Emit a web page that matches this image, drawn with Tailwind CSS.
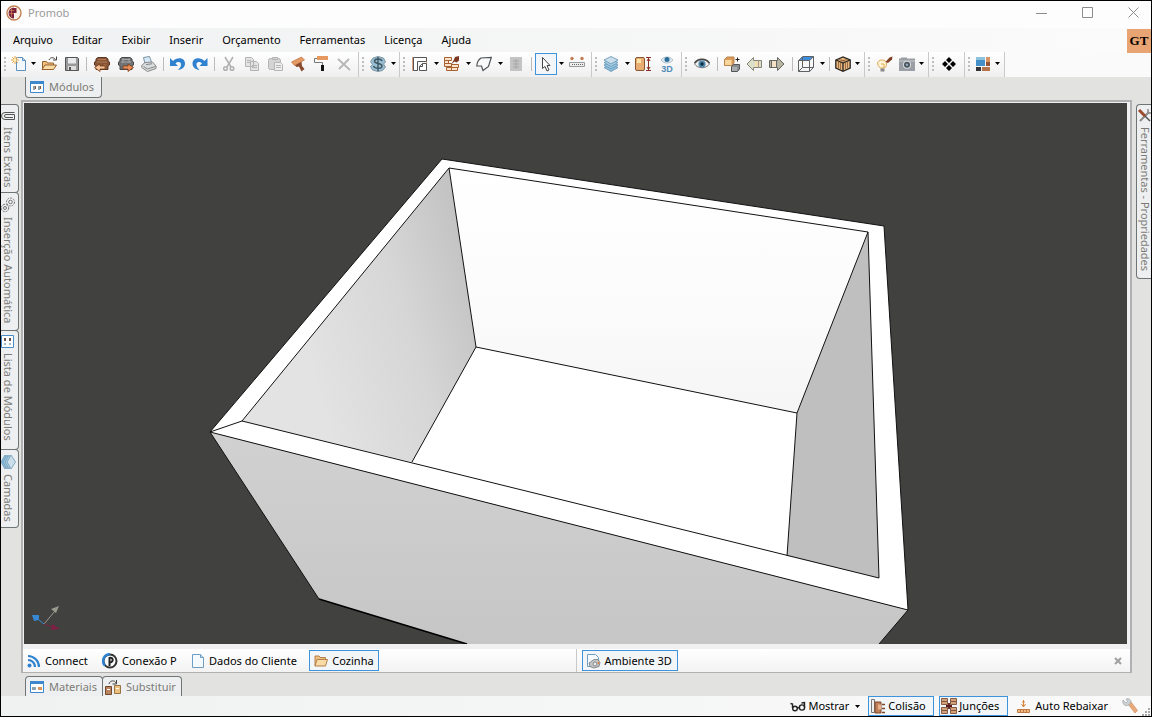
<!DOCTYPE html>
<html lang="pt-BR">
<head>
<meta charset="utf-8">
<title>Promob</title>
<script src="https://cdn.jsdelivr.net/npm/@tailwindcss/browser@4"></script>
</head>
<body class="flex h-screen flex-col overflow-hidden whitespace-nowrap border border-black bg-[#e2e2e0] font-['Noto_Sans','Open_Sans',sans-serif] text-[11px] leading-4 text-black">
<svg class="hidden">
  <symbol id="caret" viewBox="0 0 5 3"><path d="M0 0h5L2.5 3z"/></symbol>
  <symbol id="grip" viewBox="0 0 2 14"><path d="M0 0h2v2H0zM0 4h2v2H0zM0 8h2v2H0zM0 12h2v2H0z" fill="#bdbdbd"/></symbol>
</svg>

<header class="flex h-[27px] shrink-0 items-center bg-[#fdfdfd] pb-1 pl-[5px] pr-2">
  <svg class="size-4" viewBox="0 0 16 16"><circle cx="8" cy="8" r="7" fill="#fff" stroke="#c07f50" stroke-width="1.400"/><path d="M8 2.500v11A5.500 5.500 0 0 1 8 2.500z" fill="#7c1f38"/><path d="M8.500 2.500a5.500 5.500 0 0 1 0 11z" fill="#fbeee2"/><path d="M8 3h2.500v5H8z" fill="#7c1f38"/><path d="M3.500 5.500H8M3 8.500h5M5.500 3.500V12" stroke="#d08a5b" stroke-width=".7"/></svg>
  <h1 class="ml-1.5 flex-1 text-[#9b9b9b]">Promob</h1>
  <div class="flex items-center gap-[31px] pr-1 text-[#8c8c8c]">
    <button aria-label="Minimizar"><svg class="h-3 w-[11px]" viewBox="0 0 11 12"><path d="M0 6.500h11" stroke="currentColor"/></svg></button>
    <button aria-label="Maximizar" class="ml-1"><svg class="size-[11px]" viewBox="0 0 11 11"><path d="M.5.5h10v10H.5z" fill="none" stroke="currentColor"/></svg></button>
    <button aria-label="Fechar" class="ml-1"><svg class="size-[11px]" viewBox="0 0 11 11"><path d="m.5.5 10 10m0-10-10 10" stroke="currentColor"/></svg></button>
  </div>
</header>

<div class="relative shrink-0 bg-linear-to-r from-[#f0f1f2] to-[#fbfbfb]">
  <nav class="flex h-6 items-center gap-[19px] pl-3">
    <button>Arquivo</button><button>Editar</button><button>Exibir</button><button>Inserir</button><button>Orçamento</button><button>Ferramentas</button><button>Licença</button><button>Ajuda</button>
  </nav>
  <button class="absolute right-0 top-px size-6 bg-[#e8a472] font-['Liberation_Serif',serif] text-[13px] font-bold">GT</button>

  <div class="flex h-[25px] items-center bg-[#fafafa] [&>div]:pb-0.5">
    <div class="flex h-full w-[358px] items-center border-r border-[#c9c9c9] bg-linear-to-b from-white to-[#efefef]">
      <svg class="mx-[3px] h-3.5 w-0.5 shrink-0"><use href="#grip"/></svg>
      <button aria-label="Novo" class="flex h-6 w-5 items-center justify-center"><svg class="size-4" viewBox="0 0 16 16"><path d="M5.500 1.500h6l3 3v10h-9z" fill="#f2f8fd" stroke="#5c92bd"/><path d="M11.500 1.500v3h3" fill="#b9d8ef" stroke="#5c92bd"/><path d="M4 0v8M0 4h8M1.200 1.200l5.600 5.600M6.800 1.200 1.200 6.800" stroke="#e8a040"/><circle cx="4" cy="4" r="1.500" fill="#fff1b0"/></svg></button>
      <button aria-label="Mais opções de novo" class="flex h-6 w-2 items-center justify-center"><svg class="h-[3px] w-[5px]"><use href="#caret"/></svg></button>
      <button aria-label="Abrir" class="flex h-6 w-6 items-center justify-center"><svg class="size-4" viewBox="0 0 16 16"><path d="M1.500 13.500v-8h4l1 1.500h6v2" fill="#f0c07e" stroke="#97622f"/><path d="M1 13.500 4 9h11.500l-3 4.500z" fill="#f9dba5" stroke="#97622f"/><path d="M8 4c1.500-3 4.500-3 6.500-.5M15.500.5v3.500H12" fill="none" stroke="#444"/></svg></button>
      <button aria-label="Salvar" class="flex h-6 w-[22px] items-center justify-center"><svg class="size-4" viewBox="0 0 16 16"><path d="M1.500 1.500h12l1 1v12h-13z" fill="#999" stroke="#555"/><path d="M4 2h8v5.500H4z" fill="#e8eaec"/><path d="M4 10h8v4H4z" fill="#ddd"/><path d="M5 11h2v3H5z" fill="#555"/></svg></button>
      <i class="mx-[3px] h-3.5 w-px bg-[#bcbcbc]"></i>
      <button aria-label="Importar" class="flex h-6 w-6 items-center justify-center"><svg class="size-4" viewBox="0 0 16 16"><path d="M2 5V3l2-1.500h8L14 3v2l1.500 1v3L14 10v3.500H2V10L.5 9V6z" fill="#87563a" stroke="#5a3521"/><path d="M4 3.500h8M3 6h10M11 8v5" stroke="#b57a4c"/><path d="M6 8v2h5v3H6v2.500L.5 11.500z" fill="#f3c39a" stroke="#7b3c17" stroke-width=".8"/></svg></button>
      <button aria-label="Exportar" class="flex h-6 w-6 items-center justify-center"><svg class="size-4" viewBox="0 0 16 16"><path d="M2 5V3l2-1.500h8L14 3v2l1.500 1v3L14 10v3.500H2V10L.5 9V6z" fill="#707273" stroke="#454748"/><path d="M4 3.500h8M3 6h10M5 2v5m6-5v5" stroke="#a3a5a6"/><path d="M10 8v2H5v3h5v2.500l5.500-4z" fill="#e98d5b" stroke="#7b3c17" stroke-width=".8"/></svg></button>
      <button aria-label="Imprimir" class="flex h-6 w-[22px] items-center justify-center"><svg class="size-4" viewBox="0 0 16 16"><path d="M4 8 2.500 1.500 8.500.5l2.500 7z" fill="#d5e9f7" stroke="#7d93a3"/><path d="m.7 9.500 3.300-3 7.500-.5 3.500 4v2.500l-8.500 3-5.800-4z" fill="#d9dcde" stroke="#888"/><path d="m2.500 10.500 4 2.500 8-2.500M5 8.700l6-1" fill="none" stroke="#888"/></svg></button>
      <i class="mx-[3px] h-3.5 w-px bg-[#bcbcbc]"></i>
      <button aria-label="Desfazer" class="flex h-6 w-[22px] items-center justify-center"><svg class="size-4" viewBox="0 0 16 16"><path d="M0 2v8h8L5.500 7.500C8 5 11.500 6 11 9c-.2 2-1.500 3.500-3 5 4-.5 7-3 7-6.500C15 2 7.500.5 3 5z" fill="#2f82cf"/></svg></button>
      <button aria-label="Refazer" class="flex h-6 w-[22px] items-center justify-center"><svg class="size-4" viewBox="0 0 16 16"><path d="M15.500 2v8h-8L10 7.500C7.500 5 4 6 4.500 9c.2 2 1.500 3.500 3 5-4-.5-7-3-7-6.500C.5 2 8 .5 12.500 5z" fill="#2f82cf"/></svg></button>
      <i class="mx-[3px] h-3.5 w-px bg-[#bcbcbc]"></i>
      <button aria-label="Recortar" class="flex h-6 w-[22px] items-center justify-center"><svg class="size-4" viewBox="0 0 16 16"><g fill="none" stroke="#b0b0b0" stroke-width="1.500"><path d="m4 1 6 10M12 1 6 11"/><circle cx="4.500" cy="12.500" r="1.800"/><circle cx="11" cy="12.500" r="1.800"/></g></svg></button>
      <button aria-label="Copiar" class="flex h-6 w-6 items-center justify-center"><svg class="size-4" viewBox="0 0 16 16"><g fill="#e3e3e3" stroke="#b4b4b4"><path d="M1.500 1.500h6l2 2v7h-8zM6.500 5.500h6l2 2v7h-8z"/><path d="M3 4.500h4M3 6.500h3M8 9.500h5M8 11.500h5"/></g></svg></button>
      <button aria-label="Colar" class="flex h-6 w-6 items-center justify-center"><svg class="size-4" viewBox="0 0 16 16"><g fill="#d4d4d4" stroke="#b4b4b4"><rect x=".5" y="2.500" width="12" height="11" rx="2"/><path d="M4.500 1.500h5v2h-5z"/><path fill="#eee" d="M6.500 6.500h6l2 2v6h-8z"/><path d="M8 9.500h5M8 11.500h5"/></g></svg></button>
      <button aria-label="Pincel" class="flex h-6 w-[22px] items-center justify-center"><svg class="size-4" viewBox="0 0 16 16"><path d="M.5 6 10.500 1 13.500 4 3.500 9.500z" fill="#e59a63" stroke="#bd7340" stroke-width=".7"/><path d="m4 9.300 6.500-3.500.5 4.200 2.500 3-3 2.500-2.500-5-2.500.5z" fill="#8b4a2c"/></svg></button>
      <button aria-label="Rolo de pintura" class="flex h-6 w-[22px] items-center justify-center"><svg class="size-4" viewBox="0 0 16 16"><path d="M4 0h11v4H4z" fill="#e6995f"/><path d="M4 2.500H1.500v4h8V9" fill="none" stroke="#777"/><path d="M8 9h3v6H8z" fill="#111"/></svg></button>
      <button aria-label="Excluir" class="flex h-6 w-6 items-center justify-center"><svg class="size-4" viewBox="0 0 16 16"><path d="m2 3 12 11M13 3 3 13" stroke="#b6b6b6" stroke-width="1.800"/></svg></button>
    </div>
    <div class="flex h-full w-[41px] items-center border-r border-[#c9c9c9] bg-linear-to-b from-white to-[#efefef]">
      <svg class="mx-[3px] h-3.5 w-0.5 shrink-0"><use href="#grip"/></svg>
      <button aria-label="Orçamento" class="flex h-6 w-[22px] items-center justify-center"><svg class="size-4" viewBox="0 0 16 16"><path d="m3 2 5-1.500L13.500 2l2 4-2 2 2 3-3 3.500-4.500 1L2.500 14 .5 10.500l2-2-2-3z" fill="#99bdd2" stroke="#7f97a4"/><path d="M12 5c-1-3-7.500-2.500-7.500.3 0 3 7.500 1.500 7.500 4.700 0 3-7 3-8.500 0M8 1v14" fill="none" stroke="#3f5663" stroke-width="1.400"/></svg></button>
      <button aria-label="Opções de orçamento" class="flex h-6 w-2 items-center justify-center"><svg class="h-[3px] w-[5px]"><use href="#caret"/></svg></button>
    </div>
    <div class="flex h-full w-48 items-center border-r border-[#c9c9c9] bg-linear-to-b from-white to-[#efefef]">
      <svg class="mx-[3px] h-3.5 w-0.5 shrink-0"><use href="#grip"/></svg>
      <button aria-label="Paredes" class="flex h-6 w-6 items-center justify-center"><svg class="size-4" viewBox="0 0 16 16"><path d="M.5 1v13.500h5M14.500 15V1" fill="none" stroke="#e0a07a"/><path d="M1.500 14.500v-13h13v4h-9v9z" fill="#fff" stroke="#555"/><path d="M10.500 7.500h4v7h-7v-4z" fill="#fff" stroke="#555"/><path d="M7.500 10.500h3v-3" fill="none" stroke="#555"/></svg></button>
      <button aria-label="Opções de paredes" class="flex h-6 w-2 items-center justify-center"><svg class="h-[3px] w-[5px]"><use href="#caret"/></svg></button>
      <button aria-label="Alvenaria" class="flex h-6 w-6 items-center justify-center"><svg class="size-4" viewBox="0 0 16 16"><g fill="#fbe3cc" stroke="#a8602f"><path d="M.5 1.500h7v3h-7zM.5 4.500h4v3h-4zM.5 7.500h7v3h-7zM7.500 8.500h7v3h-7zM2.500 11.500h5v3h-5zM7.500 11.500h6v3h-6z"/></g><path d="m11 1 4-1v4.500l-2.500 2-2-1L7 8.500l2.500-4z" fill="#7d3921"/></svg></button>
      <button aria-label="Opções de alvenaria" class="flex h-6 w-2 items-center justify-center"><svg class="h-[3px] w-[5px]"><use href="#caret"/></svg></button>
      <button aria-label="Forma livre" class="flex h-6 w-6 items-center justify-center"><svg class="size-4" viewBox="0 0 16 16"><path d="M5 2 15.300 1.500 12.500 10.500 7 14.500 5.500 10H.8C1 6 2 4 5 2z" fill="#fafafa" stroke="#4e5357" stroke-width="1.200"/></svg></button>
      <button aria-label="Opções de forma" class="flex h-6 w-2 items-center justify-center"><svg class="h-[3px] w-[5px]"><use href="#caret"/></svg></button>
      <button aria-label="Espelho" class="flex h-6 w-6 items-center justify-center"><svg class="size-4" viewBox="0 0 16 16"><path d="M2 1h12v14H2z" fill="#c4c4c4"/><path d="M8 3v10M5 5h6M5 11h6M5 8h6" stroke="#a8a8a8"/></svg></button>
      <i class="mx-[3px] h-3.5 w-px bg-[#bcbcbc]"></i>
      <button aria-label="Selecionar" class="flex h-[22px] w-[22px] items-center justify-center border border-[#3d93dc] bg-[#f3f6f8]"><svg class="size-4" viewBox="0 0 16 16"><path d="M4.500 1.500v11l2.500-2 2 4.500 2-1-2-4.500h3z" fill="#fff" stroke="#444"/></svg></button>
      <button aria-label="Opções de seleção" class="flex h-6 w-2 items-center justify-center"><svg class="h-[3px] w-[5px]"><use href="#caret"/></svg></button>
      <button aria-label="Medir" class="flex h-6 w-6 items-center justify-center"><svg class="size-4" viewBox="0 0 16 16"><circle cx="3" cy="2.500" r="1.700" fill="#c57b51"/><circle cx="13" cy="2.500" r="1.700" fill="#c57b51"/><path d="M.5 6.500h15v4H.5z" fill="#eee" stroke="#999"/><path d="M3.500 8v1m2-1v1m2-1v1m2-1v1m2-1v1m2-1v1" stroke="#666"/></svg></button>
    </div>
    <div class="flex h-full w-[90px] items-center border-r border-[#c9c9c9] bg-linear-to-b from-white to-[#efefef]">
      <svg class="mx-[3px] h-3.5 w-0.5 shrink-0"><use href="#grip"/></svg>
      <button aria-label="Camadas" class="flex h-6 w-[22px] items-center justify-center"><svg class="size-4" viewBox="0 0 16 16"><g stroke="#5e90b3" stroke-width=".8"><path d="m8 8 7 3.500-7 4-7-4z" fill="#8fc0df"/><path d="m8 5.500 7 3.500-7 4-7-4z" fill="#9cc8e2"/><path d="m8 3 7 3.500-7 4-7-4z" fill="#a9cfe6"/><path d="m8 .5 7 3.500-7 4-7-4z" fill="#cbdfeb"/></g></svg></button>
      <button aria-label="Opções de camadas" class="ml-px flex h-6 w-2 items-center justify-center"><svg class="h-[3px] w-[5px]"><use href="#caret"/></svg></button>
      <button aria-label="Dimensões da porta" class="flex h-6 w-6 items-center justify-center"><svg class="size-4" viewBox="0 0 16 16"><rect x=".5" y="1.500" width="9" height="13" rx="1.500" fill="#e8ad73" stroke="#88552f"/><path d="M2 3h4v4H2z" fill="#fae4a5"/><path d="M11 1.500h5M11 14.500h5M13.500 2v12M12 5l1.500-2.500L15 5m-3 6 1.500 2.500L15 11" fill="none" stroke="#8b2e22"/></svg></button>
      <button aria-label="Vista 3D" class="flex h-6 w-6 items-center justify-center"><svg class="size-4" viewBox="0 0 16 16"><path d="M2 4c3-4 9-4 12 0-3 4-9 4-12 0z" fill="#dbe9f3" stroke="#a1b5c2" stroke-width=".8"/><circle cx="8" cy="3.500" r="2.500" fill="#2c6f9b"/><text x="8" y="15.500" text-anchor="middle" font-family="Liberation Sans" font-size="9" font-weight="bold" fill="#4f8cb8">3D</text></svg></button>
    </div>
    <div class="flex h-full w-[183px] items-center border-r border-[#c9c9c9] bg-linear-to-b from-white to-[#efefef]">
      <svg class="mx-[3px] h-3.5 w-0.5 shrink-0"><use href="#grip"/></svg>
      <button aria-label="Visualizar" class="flex h-6 w-6 items-center justify-center"><svg class="size-4" viewBox="0 0 16 16"><path d="M.5 8C4 3 12 2 15.500 8 12 13 4 13 .5 8z" fill="#f3f3f3" stroke="#777"/><path d="M.5 7C4 2 12 2 15.500 7" fill="none" stroke="#444" stroke-width="1.500"/><circle cx="8" cy="8" r="3.600" fill="#4d89ad"/><circle cx="8" cy="8" r="1.700" fill="#122a3a"/></svg></button>
      <i class="mx-[3px] h-3.5 w-px bg-[#bcbcbc]"></i>
      <button aria-label="Substituir módulo" class="flex h-6 w-[22px] items-center justify-center"><svg class="size-4" viewBox="0 0 16 16"><path d="M.5 3.500 3 1h7v6L8 9.500H.5z" fill="#d99a5c" stroke="#b98349"/><path d="M1 4h6.500v5H1z" fill="#f8d79d"/><path d="m7.500 10.500 2-2h6v4.500l-2 2.500h-6z" fill="#8a8e90" stroke="#555"/><path d="M8 11h5v4H8z" fill="#a9adaf"/><path d="M11.500 3.500h4M13.500 1.500v4" stroke="#222"/></svg></button>
      <button aria-label="Módulo anterior" class="flex h-6 w-[22px] items-center justify-center"><svg class="size-4" viewBox="0 0 16 16"><path d="M7.500 1.500v3h8v7h-8v3L1 8z" fill="#dedfc9" stroke="#83847a"/><path d="M9 5h5v6H9z" fill="#f4ddb0"/><path d="M12.500 4.500v7" stroke="#999"/></svg></button>
      <button aria-label="Próximo módulo" class="flex h-6 w-6 items-center justify-center"><svg class="size-4" viewBox="0 0 16 16"><path d="M8.500 1.500v3h-8v7h8v3L15 8z" fill="#b7b5a2" stroke="#65665f"/><path d="M3 5h4v6H3z" fill="#f4e1c4"/><path d="M2.500 4.500v7M7.500 5v6" stroke="#666"/></svg></button>
      <i class="mx-[3px] h-3.5 w-px bg-[#bcbcbc]"></i>
      <button aria-label="Vista superior" class="flex h-6 w-5 items-center justify-center"><svg class="size-4" viewBox="0 0 16 16"><path d="m.7 4.500 4-4h10.800l-4 4z" fill="#3d8fdd"/><path d="M.5 4.500h11v11H.5zM.7 4.500l4-4h10.800v10.800l-3.800 4.200M11.700 4.500l3.800-4M4.500 1v10.500h11M4.500 11.500l-4 4" fill="none" stroke="#5e6264"/></svg></button>
      <button aria-label="Opções de vista" class="ml-0.5 flex h-6 w-2 items-center justify-center"><svg class="h-[3px] w-[5px]"><use href="#caret"/></svg></button>
      <i class="mx-[3px] h-3.5 w-px bg-[#bcbcbc]"></i>
      <button aria-label="Renderização" class="flex h-6 w-5 items-center justify-center"><svg class="size-4" viewBox="0 0 16 16"><path d="m.8 4 7.200-3 7.200 3v8L8 15.300.8 12z" fill="#e6b67e" stroke="#2a2520" stroke-width="1.300"/><path d="m1 4 7 3 7-3M8 7v8" fill="none" stroke="#2a2520" stroke-width="1.300"/><path d="M3.500 6v6m2-5v6m5-6v6m2-7v6M4 3.500l7 2m1-2-7 2" stroke="#8b5a34" stroke-width=".8"/></svg></button>
      <button aria-label="Opções de renderização" class="flex h-6 w-2 items-center justify-center"><svg class="h-[3px] w-[5px]"><use href="#caret"/></svg></button>
    </div>
    <div class="flex h-full w-16 items-center border-r border-[#c9c9c9] bg-linear-to-b from-white to-[#efefef]">
      <svg class="mx-[3px] h-3.5 w-0.5 shrink-0"><use href="#grip"/></svg>
      <button aria-label="Iluminação" class="flex h-6 w-6 items-center justify-center"><svg class="size-4" viewBox="0 0 16 16"><path d="M3.500 12C-1 9 0 4 5 4s6 5 2.500 8z" fill="#fff4d7" stroke="#dda552"/><path d="M3.500 12.500h4v3h-4z" fill="#888"/><path d="M4 8h3v4" fill="none" stroke="#e3a84f"/><path d="m8.500 6 4-4.500L15.500.5l-.5 3L11 7z" fill="#7f3f25"/></svg></button>
      <button aria-label="Câmera" class="flex h-6 w-5 items-center justify-center"><svg class="size-4" viewBox="0 0 16 16"><path d="M0 2.500h2V1.500h6v1h8V15H0z" fill="#9a9fa6"/><path d="M0 5h16" stroke="#c6c9cd"/><circle cx="8" cy="8.700" r="4" fill="#d7dee2"/><circle cx="8" cy="8.700" r="3" fill="#4b5358"/><circle cx="8" cy="8.700" r="1.200" fill="#8dafc3"/></svg></button>
      <button aria-label="Opções de câmera" class="flex h-6 w-2 items-center justify-center"><svg class="h-[3px] w-[5px]"><use href="#caret"/></svg></button>
    </div>
    <div class="flex h-full w-9 items-center border-r border-[#c9c9c9] bg-linear-to-b from-white to-[#efefef]">
      <svg class="mx-[3px] h-3.5 w-0.5 shrink-0"><use href="#grip"/></svg>
      <button aria-label="Componentes" class="flex h-6 w-6 items-center justify-center"><svg class="size-4" viewBox="0 0 16 16"><path d="m8 1 3 3-3 3-3-3zM4 5l3 3-3 3-3-3zM12 5l3 3-3 3-3-3zM8 9l3 3-3 3-3-3z"/></svg></button>
    </div>
    <div class="flex h-full w-10 items-center border-r border-[#c9c9c9] bg-linear-to-b from-white to-[#efefef]">
      <svg class="mx-[3px] h-3.5 w-0.5 shrink-0"><use href="#grip"/></svg>
      <button aria-label="Leiaute" class="flex h-6 w-5 items-center justify-center"><svg class="size-4" viewBox="0 0 16 16"><path d="M1 1h9v9H1z" fill="#458fc9"/><path d="M1 1h9v3H1z" fill="#8dc2dd"/><path d="M11 1h4v5h-4z" fill="#d89463"/><path d="M11 6h4v4h-4z" fill="#95543a"/><path d="M1 11h5v4H1z" fill="#333"/><path d="M7 11h8v4H7z" fill="#b4734b"/></svg></button>
      <button aria-label="Opções de leiaute" class="flex h-6 w-2 items-center justify-center"><svg class="h-[3px] w-[5px]"><use href="#caret"/></svg></button>
    </div>
  </div>
</div>

<div class="flex min-h-0 flex-1 text-[#7b7b76]">
  <aside class="flex w-5 shrink-0 flex-col pr-0.5 pt-[27px] [&>button]:flex [&>button]:w-[18px] [&>button]:flex-col [&>button]:items-center [&>button]:gap-1 [&>button]:rounded-r [&>button]:border [&>button]:border-l-0 [&>button]:border-[#6f7474] [&>button]:bg-[#eeeff0] [&>button]:pr-[3px] [&>button]:pt-1">
    <button class="h-[89px]"><svg class="size-3.5 shrink-0" viewBox="0 0 14 14"><path d="M13.500 3.500H4a3 3 0 0 0 0 7h9.500v-5H5a1.300 1.300 0 0 0 0 3h7" fill="none" stroke="#555"/></svg><span class="[writing-mode:vertical-rl]">Itens Extras</span></button>
    <button class="-mt-px h-[139px]"><svg class="size-4 shrink-0" viewBox="0 0 16 16"><g fill="none" stroke="#777"><circle cx="10.500" cy="5" r="4" stroke-dasharray="2 1"/><circle cx="10.500" cy="5" r="1.800"/><circle cx="5" cy="11" r="3.700" stroke-dasharray="2 1"/><circle cx="5" cy="11" r="1.500"/></g></svg><span class="[writing-mode:vertical-rl]">Inserção Automática</span></button>
    <button class="-mt-px h-[120px]"><svg class="size-3.5 shrink-0" viewBox="0 0 14 14"><path d="M.5.5h12v12H.5z" fill="#fff" stroke="#4a8cc6"/><path d="M3 3h2v3H3zM8 3h2v3H8z" fill="#6b5247"/><path d="M3 8h2v2H3zM8 8h2v2H8z" fill="#a6bccb"/></svg><span class="[writing-mode:vertical-rl]">Lista de Módulos</span></button>
    <button class="-mt-px h-[79px]"><svg class="size-4 shrink-0" viewBox="0 0 16 16"><g stroke="#6d98b5" stroke-width=".8"><path d="m5 1 4 7-4 7-4-7z" fill="#8fc0df"/><path d="m7 1 4 7-4 7-4-7z" fill="#9cc8e2"/><path d="m9 1 4 7-4 7-4-7z" fill="#a9cfe6"/><path d="m11 1 4.500 7-4.500 7L7 8z" fill="#cbdfeb"/></g></svg><span class="[writing-mode:vertical-rl]">Camadas</span></button>
  </aside>

  <main class="flex min-w-0 flex-1 flex-col">
    <div class="h-[23px] pl-1">
      <button class="flex h-[21px] w-[77px] items-center gap-[5px] rounded-b border border-t-0 border-[#6f7474] bg-[#eeeff0] pl-1"><svg class="size-3.5" viewBox="0 0 14 14"><path d="M.5 1.500h13v11H.5z" fill="#fff" stroke="#3c87cd"/><path d="M0 1h14v3H0z" fill="#3c87cd"/><path d="M3 6h2v4H3zM8 6h2v4H8z" fill="#8aa2ae"/><path d="M5 6h1v3H5zm5 0h1v3h-1z" fill="#8b593d"/></svg>Módulos</button>
    </div>
    <section class="flex min-h-0 flex-1 flex-col border-2 border-b border-[#b1b1b3] bg-[#f0f0f0]">
      <div class="ml-px mr-[3px] mt-px min-h-0 flex-1 bg-[#414140]">
        <svg class="block size-full" viewBox="24 103 1103 541" preserveAspectRatio="xMidYMid slice" role="img" aria-label="Caixa em perspectiva">
          <defs>
            <linearGradient id="left" gradientUnits="userSpaceOnUse" x1="300" y1="340" x2="474" y2="290"><stop offset="0" stop-color="#e3e3e3"/><stop offset=".6" stop-color="#d6d6d6"/><stop offset="1" stop-color="#c4c4c4"/></linearGradient>
            <linearGradient id="back" x1="0" y1="0" x2="0" y2="1"><stop offset="0" stop-color="#fff"/><stop offset=".6" stop-color="#fbfbfb"/><stop offset="1" stop-color="#f5f5f5"/></linearGradient>
            <linearGradient id="front" x1="0" y1="0" x2="0" y2="1"><stop offset="0" stop-color="#d1d1d1"/><stop offset="1" stop-color="#c5c5c5"/></linearGradient>
          </defs>
          <path d="M210 432 908 610l-29 34v20H532l-65-20-148-45z" fill="url(#front)"/>
          <path d="m442 159 442 67 24 384-698-178z" fill="#fff"/>
          <path d="M449 168 242 421l170 41 64-115z" fill="url(#left)"/>
          <path d="m449 168 419 64-71 181-321-66z" fill="url(#back)"/>
          <path d="m868 232 11 346-92-22 10-143z" fill="#bfbfbf"/>
          <g fill="none" stroke="#111" stroke-linejoin="round">
            <path d="m442 159 442 67 24 384-698-178zM449 168l419 64 11 346-637-157zM449 168l27 179 321 66 71-181M476 347l-64 115M797 413l-10 143M210 432l32-11M210 432l109 167M908 610l-29 34"/>
            <path d="m319 599 148 45" stroke-width="1.600" stroke="#000"/>
          </g>
          <path d="m44 624 11-13" stroke="#9a998e"/><path d="m59 606-8 3 5 4z" fill="#9a998e"/>
          <path d="m44 624-5-4" stroke="#3688d5"/><path d="M32 615h7v5l-5 1z" fill="#3688d5"/>
          <path d="m44 624 8 3" stroke="#7d2043"/><path d="m52 624 8 5-9 1z" fill="#7d2043"/>
        </svg>
      </div>
      <div class="mt-[5px] flex h-[23px] shrink-0 items-center bg-linear-to-b from-white to-[#f3f3f3] text-black">
        <div class="flex h-full w-1/2 items-center border-r border-[#c9c9c9] pl-0.5 [&>button]:flex [&>button]:shrink-0 [&>button]:items-center [&>button]:gap-1">
          <button class="w-[76px] pl-0.5"><svg class="size-3.5" viewBox="0 0 14 14"><circle cx="2.500" cy="11.500" r="2" fill="#2f82cf"/><path d="M1 6a7 7 0 0 1 7 7M1 2a11 11 0 0 1 11 11" fill="none" stroke="#2f82cf" stroke-width="2.200"/></svg>Connect</button>
          <button class="w-[90px] pl-px"><svg class="size-4" viewBox="0 0 16 16"><circle cx="8" cy="8" r="6.500" fill="#fff" stroke="#333" stroke-width="2"/><path d="M8 1.200a6.800 6.800 0 0 0-5 11.500" fill="none" stroke="#2f82cf" stroke-width="2.500"/><path d="M7.500 13V5c4-1.500 4.500 4.500 0 4.500" fill="none" stroke="#222" stroke-width="2"/></svg>Conexão P</button>
          <button class="w-[118px]"><svg class="size-3.5" viewBox="0 0 14 14"><path d="M1.500.5h8l3 3v10h-11z" fill="#f5fafe" stroke="#6f9ec4"/><path d="M9.500.5v3h3" fill="#b9d8ef" stroke="#6f9ec4"/></svg>Dados do Cliente</button>
          <button class="h-[21px] w-[70px] justify-center border border-[#3d93dc] bg-[#f3f6f8]"><svg class="size-3.5" viewBox="0 0 14 14"><path d="M1 12V2h4l1 1.500h5.500V7" fill="#f0c07e" stroke="#b47f48"/><path d="m1 12 2-6.500h10.500L11.500 12z" fill="#f9dba5" stroke="#b47f48"/></svg>Cozinha</button>
        </div>
        <div class="flex h-full flex-1 items-center justify-between pl-[5px] pr-2">
          <button class="flex h-[21px] w-24 items-center gap-[3px] border border-[#3d93dc] bg-[#f3f6f8] pl-[3px]"><svg class="size-4 shrink-0" viewBox="0 0 16 16"><path d="M1.500 1.500h8l3 3v9h-11z" fill="#f5fafe" stroke="#6f9ec4"/><path d="m3 10 5-3.500h4l2 3-1 4-5 1.500-4-1.500z" fill="#c1c4c8" stroke="#777" stroke-width=".8"/><circle cx="9" cy="11" r="2" fill="#eee" stroke="#888"/><circle cx="12.500" cy="10" r="1" fill="#e37b38"/></svg>Ambiente 3D</button>
          <button aria-label="Fechar ambiente"><svg class="size-2" viewBox="0 0 8 8"><path d="m1 1 6 6m0-6L1 7" stroke="#a0a0a0" stroke-width="2"/></svg></button>
        </div>
      </div>
    </section>
    <div class="flex h-[23px] items-end pl-1 pt-[3px]">
      <button class="flex h-5 w-[78px] items-center gap-[5px] rounded-t border border-b-0 border-[#6f7474] bg-[#eeeff0] pl-1"><svg class="size-3.5" viewBox="0 0 14 14"><path d="M.5 1.500h13v11H.5z" fill="#fff" stroke="#3c87cd"/><path d="M0 1h14v3H0z" fill="#3c87cd"/><path d="M2 7h4v3H2z" fill="#8aa2ae"/><path d="M8 7h4v3H8z" fill="#df945d"/></svg>Materiais</button>
      <button class="-ml-px flex h-5 w-20 items-center gap-[5px] rounded-t border border-b-0 border-[#6f7474] bg-[#eeeff0] pl-0.5"><svg class="size-4" viewBox="0 0 16 16"><path d="M.5 7.500h6v8h-6z" fill="#b98560" stroke="#73482e"/><path d="M9.500 6.500h6v8h-6z" fill="#ecc17f" stroke="#9a7345"/><path d="M2 10.500h3m6-1h3" stroke="#fff"/><path d="M4 5c1-4 6-4 7-1M11.500 1v4h-4" fill="none" stroke="#444"/></svg>Substituir</button>
    </div>
  </main>

  <aside class="flex w-[19px] shrink-0 flex-col items-end pt-[27px]">
    <button class="flex h-[175px] w-[15px] flex-col items-start gap-1 rounded-l border border-r-0 border-[#6f7474] bg-[#eeeff0] pl-px pt-1"><svg class="size-3.5 shrink-0" viewBox="0 0 14 14"><path d="m2 12 9-9" stroke="#888" stroke-width="2"/><path d="M10 0v4h4" fill="none" stroke="#888" stroke-width="1.500"/><path d="m1 1 6 6" stroke="#9c4a2c" stroke-width="3"/><path d="m7 7 5 5" stroke="#555" stroke-width="1.500"/></svg><span class="leading-[14px] [writing-mode:vertical-rl]">Ferramentas - Propriedades</span></button>
  </aside>
</div>

<footer class="flex h-5 shrink-0 items-center justify-end bg-linear-to-r from-[#f0f1f1] to-[#fafafa] [&>button]:flex [&>button]:h-full [&>button]:items-center">
  <button class="mr-2 gap-0.5"><svg class="size-4" viewBox="0 0 16 16"><g fill="none" stroke="#222" stroke-width="1.400"><circle cx="5" cy="10.500" r="2.300"/><circle cx="12" cy="9.500" r="2.600"/><path d="M7.300 10 9.500 9.500M2.500 10V6L.5 5.500M14.500 9.500V4.500l-3 .5"/></g></svg>Mostrar<svg class="ml-1 h-[3px] w-[5px]"><use href="#caret"/></svg></button>
  <button class="mr-[5px] w-[66px] gap-0.5 border border-[#3d93dc] bg-[#f3f6f8] pl-px"><svg class="size-4" viewBox="0 0 16 16"><path d="M1.500 1.500h3v13h-3z" fill="#eee" stroke="#777"/><path d="M5 4h6v11H5z" fill="#bd7e58" stroke="#7d482d"/><path d="M8 6.500h3v5H8z" fill="#e8b18b"/><path d="M12 6.500h3M12 10.500h3M12 14.500h3" stroke="#7d482d" stroke-width="1.500"/></svg>Colisão</button>
  <button class="mr-2 w-[69px] gap-0.5 border border-[#3d93dc] bg-[#f3f6f8] pl-px"><svg class="size-4" viewBox="0 0 16 16"><path d="M.5.5h6v6h-6zM9.500.5h6v6h-6zM.5 9.500h6v6h-6zM9.500 9.500h6v6h-6z" fill="#d3a27d" stroke="#6c4128" stroke-width=".8"/><path d="M1 3.500h5m4 0h5M1 12.500h5m4 0h5" stroke="#6c4128" stroke-width=".8"/><path d="M8 5v6M5 8h6" stroke="#5b1919" stroke-width="1.800"/></svg>Junções</button>
  <button class="mr-3.5 gap-[3px]"><svg class="size-4" viewBox="0 0 16 16"><path d="M1.500 11.500h12v3h-12z" fill="#f3b981" stroke="#c07a46"/><path d="M7.500 2v7M5.500 6l2 3 2-3M6 4h3" fill="none" stroke="#d9863e"/><path d="M4.500 12v2m3-2v2m3-2v2" stroke="#c07a46"/></svg>Auto Rebaixar</button>
  <button aria-label="Configurações"><svg class="size-4" viewBox="0 0 16 16"><path d="m6 6 3-2 6.500 8.500L13 15z" fill="#e9a979" stroke="#cf8e60" stroke-width=".7"/><path d="M1 2c-1 4 2 7 6 5l2-3C9 1 6 0 4 1l1.500 2.500L4 5z" fill="#ccd1d3" stroke="#a0a5a7" stroke-width=".7"/></svg></button>
  <svg class="ml-1 mr-px size-2 self-end" viewBox="0 0 8 8"><path d="M6 0h2v2H6zM3 3h2v2H3zM6 3h2v2H6zM0 6h2v2H0zM3 6h2v2H3zM6 6h2v2H6z" fill="#a7a7a7"/></svg>
</footer>
</body>
</html>
